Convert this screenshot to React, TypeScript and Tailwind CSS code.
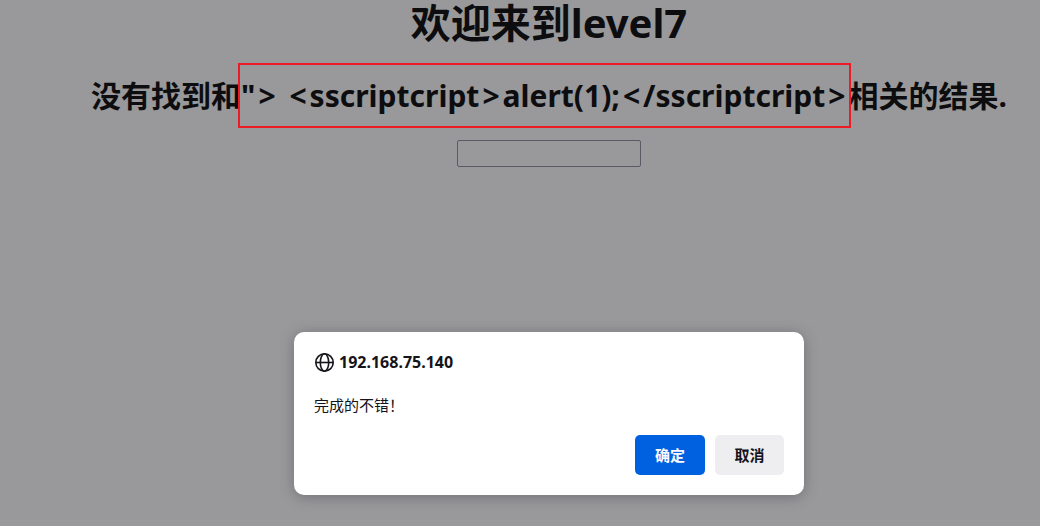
const bracket = "mx-[3px]";

export default function App() {
  return (
    <div className="relative min-h-screen overflow-hidden bg-[#99999b] pl-[58px] font-['Noto_Sans','Noto_Sans_CJK_SC',sans-serif] text-[#0d0d10]">
      <main className="flex flex-col items-center">
        <h1 className="text-[40px] leading-[46px] font-bold">欢迎来到level7</h1>
        <h2 className="mt-7 whitespace-nowrap text-[30px] leading-[44px] font-bold">
          没有找到和
          <span className="relative">
            "<span className={bracket}>&gt;</span>{' '}
            <span className={bracket}>&lt;</span>sscriptcript
            <span className={bracket}>&gt;</span>alert(1);
            <span className={bracket}>&lt;</span>/sscriptcript
            <span className={bracket}>&gt;</span>
            <span className="pointer-events-none absolute -inset-x-[3px] -inset-y-3 border-2 border-[#ed1c24]" />
          </span>
          相关的结果.
        </h2>
        <input
          type="text"
          name="keyword"
          aria-label="keyword"
          className="mt-[22px] h-[27px] w-[184px] rounded-xs border border-[#5b5966] bg-transparent px-1 text-base outline-none"
        />
      </main>

      <div className="absolute inset-x-0 top-[332px] flex justify-center pl-[58px]">
        <div
          role="alertdialog"
          aria-labelledby="dialog-host"
          aria-describedby="dialog-message"
          className="w-[510px] rounded-[10px] bg-white p-5 text-[#15141a] shadow-[0_2px_14px_rgba(58,57,68,0.4)]"
        >
          <div className="flex h-5 items-center gap-[5px]">
            <svg viewBox="0 0 20 20" className="size-5" fill="none" stroke="currentColor" strokeWidth="1.6" aria-hidden="true">
              <circle cx="10.5" cy="10.5" r="8.7" />
              <ellipse cx="10.5" cy="10.5" rx="4.2" ry="8.7" />
              <path d="M1.8 10.5h17.4" />
            </svg>
            <strong id="dialog-host" className="text-[16px] leading-5 font-bold">192.168.75.140</strong>
          </div>
          <p id="dialog-message" className="mt-[23px] text-[15px] leading-5">完成的不错！</p>
          <div className="mt-5 flex justify-end gap-[10px] text-[15px] font-bold">
            <button type="button" className="h-10 w-[70px] rounded-[5px] bg-[#0061e0] text-[#fbfbfe]">确定</button>
            <button type="button" className="h-10 w-[69px] rounded-[5px] bg-[#eeeef0]">取消</button>
          </div>
        </div>
      </div>
    </div>
  );
}
